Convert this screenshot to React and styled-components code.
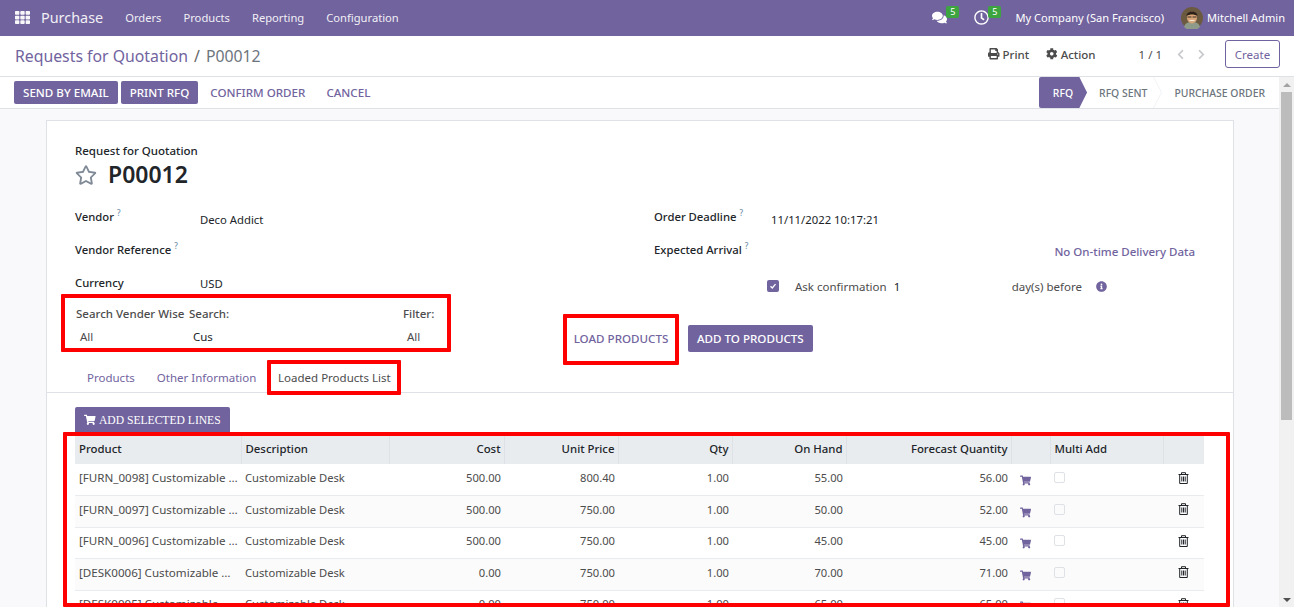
import React from 'react';
import styled, { createGlobalStyle } from 'styled-components';
import {
  FaCog,
  FaChevronLeft,
  FaChevronRight,
  FaComments,
  FaInfoCircle,
  FaPrint,
  FaRegClock,
  FaRegStar,
  FaShoppingCart,
  FaTh,
} from 'react-icons/fa';

const purple = '#71639e';
const red = '#ff0000';

const GlobalStyle = createGlobalStyle`
  html, body {
    margin: 0;
    height: 100%;
    overflow: hidden;
  }
  body {
    font-family: "Noto Sans", "Open Sans", sans-serif;
    font-size: 11.5px;
    color: #212529;
  }
`;

const Page = styled.div`
  height: 607px;
  display: flex;
  flex-direction: column;
  overflow: hidden;
`;

const NavBar = styled.header`
  height: 36px;
  flex: none;
  box-sizing: border-box;
  background: ${purple};
  color: #fff;
  display: flex;
  align-items: center;
  padding: 0 9px 1px 15px;
`;

const AppsIcon = styled(FaTh)`
  font-size: 15px;
  margin-right: 11px;
  opacity: 0.95;
`;

const Brand = styled.span`
  font-size: 14.4px;
  margin-right: 22px;
  opacity: 0.9;
`;

const NavItem = styled.span`
  font-size: 11.2px;
  margin-right: 22px;
  opacity: 0.9;
`;

const NavRight = styled.div`
  margin-left: auto;
  display: flex;
  align-items: center;
  font-size: 11.1px;
`;

const NavIcon = styled.span`
  position: relative;
  display: flex;
  font-size: 15px;
  margin-right: ${(p) => p.$gap}px;
`;

const Badge = styled.span`
  position: absolute;
  top: -4px;
  left: 14px;
  width: 13px;
  height: 12px;
  border-radius: 2px;
  background: #3da53f;
  color: #fff;
  font-size: 9px;
  line-height: 12px;
  text-align: center;
`;

const Avatar = styled.svg`
  width: 22px;
  height: 22px;
  margin: 0 4px 0 17px;
`;

const TitleRow = styled.div`
  height: 40px;
  flex: none;
  display: flex;
  align-items: center;
  padding: 0 14px 0 15px;
  background: #fff;
  border-bottom: 1px solid #dee2e6;
`;

const Breadcrumb = styled.div`
  font-size: 15.8px;
  margin-top: -1px;
  color: ${purple};
`;

const Slash = styled.span`
  color: #666;
  margin: 0 6px;
`;

const Current = styled.span`
  color: #6c757d;
`;

const SideActions = styled.div`
  margin-left: auto;
  display: flex;
  align-items: center;
  color: #4c4c4c;
  margin-top: -4px;
`;

const ActionLink = styled.span`
  display: flex;
  align-items: center;
  gap: 3px;
  margin-right: ${(p) => p.$gap}px;
  font-weight: 500;
`;

const Pager = styled.span`
  margin-right: 13px;
`;

const PagerArrow = styled.span`
  display: flex;
  color: #c7c9cc;
  font-size: 11px;
  margin-right: ${(p) => p.$gap}px;
`;

const CreateButton = styled.button`
  width: 55px;
  height: 28px;
  padding: 0;
  background: #fff;
  border: 1px solid ${purple};
  border-radius: 3px;
  color: ${purple};
  font: inherit;
`;

const Body = styled.div`
  flex: 1;
  min-height: 0;
  display: flex;
`;

const Main = styled.div`
  flex: 1;
  min-width: 0;
  display: flex;
  flex-direction: column;
`;

const StatusRow = styled.div`
  height: 31px;
  flex: none;
  display: flex;
  align-items: center;
  padding-left: 14px;
  background: #fff;
  border-bottom: 1px solid #dee2e6;
`;

const Button = styled.button`
  height: ${(p) => p.$h || 23}px;
  padding: 0 9px;
  margin-right: ${(p) => p.$gap || 0}px;
  border: none;
  border-radius: 2px;
  background: ${(p) => (p.$primary ? purple : 'transparent')};
  color: ${(p) => (p.$primary ? '#fff' : purple)};
  font-family: inherit;
  font-size: 11.6px;
  font-weight: 500;
  white-space: nowrap;
`;

const StatusBar = styled.div`
  margin-left: auto;
  display: flex;
  align-self: stretch;
  padding-right: 14px;
  font-size: 10.4px;
  font-weight: 500;
  color: #6c757d;
`;

const Stage = styled.span`
  position: relative;
  display: flex;
  align-items: center;
  padding-left: ${(p) => p.$left}px;
  padding-right: ${(p) => p.$right}px;
  ${(p) =>
    p.$active &&
    `
    background: ${purple};
    color: #fff;
    border-radius: 2px 0 0 2px;
    clip-path: polygon(0 0, 84% 0, 100% 50%, 84% 100%, 0 100%);
  `}
`;

const StageArrow = styled.svg`
  position: absolute;
  top: 0;
  right: 12px;
  width: 9px;
  height: 31px;
`;

const Content = styled.main`
  flex: 1;
  min-height: 0;
  background: #f9f9fb;
  padding: 11px 45px 0 46px;
  overflow: hidden;
`;

const ScrollBar = styled.div`
  width: 15px;
  flex: none;
  background: #f1f1f1;
  display: flex;
  flex-direction: column;
  align-items: center;
`;

const ScrollArrow = styled.span`
  width: 0;
  height: 0;
  margin: 6px 0 5px;
  border-left: 4px solid transparent;
  border-right: 4px solid transparent;
  ${(p) => (p.$up ? 'border-bottom: 4px solid #a3a3a3;' : 'border-top: 4px solid #505050;')}
`;

const ScrollThumb = styled.div`
  width: 11px;
  flex: 0 0 328px;
  background: #bcbcbc;
`;

const ScrollSpace = styled.div`
  flex: 1;
`;

const Sheet = styled.section`
  background: #fff;
  border: 1px solid #dee2e6;
  border-bottom: none;
  min-height: 520px;
`;

const Heading = styled.div`
  padding: 22px 28px 0;
  height: 66px;
`;

const Caption = styled.div`
  font-weight: 500;
  line-height: 16px;
`;

const DocTitle = styled.h1`
  display: flex;
  align-items: center;
  gap: 11px;
  margin: 0;
  font-size: 23px;
  font-weight: 600;
  line-height: 31px;
`;

const Star = styled(FaRegStar)`
  font-size: 22px;
  color: #7f8a96;
`;

const FormGrid = styled.div`
  display: grid;
  grid-template-columns: 579px 1fr;
  padding-left: 28px;
  height: 85px;
`;

const FieldRow = styled.div`
  display: flex;
  height: ${(p) => p.$h || 33}px;
`;

const Label = styled.div`
  width: ${(p) => p.$w}px;
  flex: none;
  font-weight: 500;
  font-size: 11.3px;
  line-height: 16px;
`;

const Hint = styled.sup`
  font-size: 8px;
  line-height: 0;
  color: #6f8fa8;
  margin-left: 3px;
`;

const Value = styled.div`
  padding-top: ${(p) => p.$top || 3}px;
  line-height: 16px;
  font-size: 11.3px;
`;

const OnTime = styled.div`
  margin-left: auto;
  margin-right: 38px;
  color: ${purple};
  font-weight: 500;
  line-height: 20px;
`;

const ConfirmRow = styled.div`
  display: flex;
  align-items: center;
  height: 16px;
  margin: 3px 0 0 113px;
  color: #4c4c4c;
`;

const CheckMark = styled.span`
  width: 12px;
  height: 12px;
  border-radius: 2px;
  background: ${purple};
  display: flex;
  align-items: center;
  justify-content: center;
  margin-right: 16px;
`;

const Qty = styled.span`
  width: 118px;
  margin-left: 7px;
  color: #212529;
`;

const InfoIcon = styled(FaInfoCircle)`
  color: ${purple};
  font-size: 11px;
  margin-left: 14px;
`;

const LoadRow = styled.div`
  display: flex;
  align-items: flex-start;
  height: 66px;
  padding-left: 14px;
`;

const RedBox = styled.div`
  border: 4px solid ${red};
  border-radius: 1px;
  box-sizing: border-box;
  flex: none;
`;

const FilterBox = styled(RedBox)`
  width: 390px;
  height: 58px;
  display: grid;
  grid-template-columns: 113px 214px 1fr;
  padding: 8px 0 0 11px;
  color: #4c4c4c;
  line-height: 16px;
`;

const FilterLabel = styled.div`
  font-weight: 500;
`;

const FilterValue = styled.div`
  padding: 3px 0 0 4px;
  color: ${(p) => (p.$dark ? '#212529' : '#4c4c4c')};
`;

const LoadBox = styled(RedBox)`
  width: 116px;
  height: 51px;
  margin: 20px 9px 0 112px;
  padding-bottom: 2px;
  display: flex;
  align-items: center;
  justify-content: center;
`;

const AddButton = styled(Button)`
  margin-top: 31px;
  height: 27px;
`;

const TabBar = styled.div`
  display: flex;
  align-items: center;
  height: 32px;
  padding-left: 40px;
  border-bottom: 1px solid #dee2e6;
`;

const Tab = styled.span`
  color: ${purple};
  margin-top: 2px;
  margin-right: ${(p) => p.$gap}px;
`;

const TabBox = styled(RedBox)`
  width: 134px;
  height: 35px;
  margin-top: 3px;
  display: flex;
  align-items: center;
  justify-content: center;
  color: #4c4c4c;
`;

const LinesPanel = styled.div`
  padding: 14px 0 0 16px;
`;

const AddLinesButton = styled.button`
  display: flex;
  align-items: center;
  justify-content: center;
  gap: 3px;
  margin-left: 12px;
  width: 155px;
  height: 26px;
  padding: 0;
  border: none;
  border-radius: 2px 2px 0 0;
  background: ${purple};
  color: #fff;
  font-family: "Liberation Serif", serif;
  font-size: 11.6px;
  white-space: nowrap;
`;

const TableBox = styled(RedBox)`
  width: 1167px;
  height: 175px;
  margin-top: -1px;
  padding-left: 8px;
  overflow: hidden;
`;

const Table = styled.table`
  width: 1129px;
  table-layout: fixed;
  border-collapse: collapse;
  font-size: 11.2px;
`;

const Th = styled.th`
  height: 28px;
  padding: 0 3px 4px 4px;
  box-sizing: border-box;
  background: #e9ecef;
  border-right: 1px solid #dee2e6;
  font-size: 11.4px;
  font-weight: 500;
  text-align: ${(p) => (p.$right ? 'right' : 'left')};
  white-space: nowrap;

  &:last-child {
    border-right: none;
  }
`;

const Tr = styled.tr`
  height: 31.5px;
  border-bottom: 1px solid #e9ecef;

  &:nth-child(even) {
    background: #fbfbfb;
  }
`;

const Td = styled.td`
  padding: 0 3px 4px 4px;
  color: #4c4c4c;
  text-align: ${(p) => p.$align || 'left'};
  white-space: nowrap;

  &:first-child {
    font-size: 11.6px;
  }
`;

const CartIcon = styled(FaShoppingCart)`
  display: block;
  margin: 6px 0 0 5px;
  font-size: 11px;
  color: ${purple};
`;

const TrashIcon = styled.svg`
  display: block;
  width: 11px;
  height: 12px;
  margin: 0 0 0 11px;
`;

const RowCheck = styled.span`
  display: block;
  width: 9px;
  height: 9px;
  border: 1px solid #dee2e6;
  border-radius: 2px;
`;

const columns = [
  { name: 'Product', width: 166 },
  { name: 'Description', width: 148 },
  { name: 'Cost', width: 115, right: true },
  { name: 'Unit Price', width: 114, right: true },
  { name: 'Qty', width: 114, right: true },
  { name: 'On Hand', width: 114, right: true },
  { name: 'Forecast Quantity', width: 165, right: true },
  { name: '', width: 39 },
  { name: 'Multi Add', width: 113 },
  { name: '', width: 41 },
];

const lines = [
  ['[FURN_0098] Customizable …', '500.00', '800.40', '55.00', '56.00'],
  ['[FURN_0097] Customizable …', '500.00', '750.00', '50.00', '52.00'],
  ['[FURN_0096] Customizable …', '500.00', '750.00', '45.00', '45.00'],
  ['[DESK0006] Customizable …', '0.00', '750.00', '70.00', '71.00'],
  ['[DESK0005] Customizable …', '0.00', '750.00', '65.00', '65.00'],
];

const App = () => (
  <Page>
    <GlobalStyle />
    <NavBar>
      <AppsIcon />
      <Brand>Purchase</Brand>
      <NavItem>Orders</NavItem>
      <NavItem>Products</NavItem>
      <NavItem>Reporting</NavItem>
      <NavItem>Configuration</NavItem>
      <NavRight>
        <NavIcon $gap={27}>
          <FaComments />
          <Badge>5</Badge>
        </NavIcon>
        <NavIcon $gap={26}>
          <FaRegClock />
          <Badge>5</Badge>
        </NavIcon>
        <span>My Company (San Francisco)</span>
        <Avatar viewBox="0 0 22 22">
          <circle cx="11" cy="11" r="11" fill="#6b5a40" />
          <path d="M3 20c1-4 4-5 8-5s7 1 8 5a11 11 0 0 1-16 0z" fill="#8e9a8a" />
          <ellipse cx="11" cy="10.500" rx="5" ry="6" fill="#d9a679" />
          <path d="M5.500 9c0-6 11-6 11 0-3-2-8-2-11 0z" fill="#2c2019" />
          <path d="M6.500 10h4M11.500 10h4" stroke="#3a2c22" strokeWidth="1" />
          <path d="M8.500 13.500h5" stroke="#f4ead8" strokeWidth="1" />
        </Avatar>
        <span>Mitchell Admin</span>
      </NavRight>
    </NavBar>
    <TitleRow>
      <Breadcrumb>
        Requests for Quotation<Slash>/</Slash>
        <Current>P00012</Current>
      </Breadcrumb>
      <SideActions>
        <ActionLink $gap={17}>
          <FaPrint />
          Print
        </ActionLink>
        <ActionLink $gap={43}>
          <FaCog />
          Action
        </ActionLink>
        <Pager>1 / 1</Pager>
        <PagerArrow $gap={10}>
          <FaChevronLeft />
        </PagerArrow>
        <PagerArrow $gap={18}>
          <FaChevronRight />
        </PagerArrow>
        <CreateButton>Create</CreateButton>
      </SideActions>
    </TitleRow>
    <Body>
      <Main>
        <StatusRow>
          <Button $primary $gap={3}>SEND BY EMAIL</Button>
          <Button $primary $gap={3}>PRINT RFQ</Button>
          <Button $gap={3}>CONFIRM ORDER</Button>
          <Button>CANCEL</Button>
          <StatusBar>
            <Stage $active $left={14} $right={14}>RFQ</Stage>
            <Stage $left={12} $right={27}>
              RFQ SENT
              <StageArrow viewBox="0 0 9 31" fill="none" stroke="#f1f3f5">
                <path d="M.500 0l8 15.500-8 15.500" />
              </StageArrow>
            </Stage>
            <Stage $left={0} $right={0}>PURCHASE ORDER</Stage>
          </StatusBar>
        </StatusRow>
        <Content>
          <Sheet>
            <Heading>
              <Caption>Request for Quotation</Caption>
              <DocTitle>
                <Star />
                P00012
              </DocTitle>
            </Heading>
            <FormGrid>
              <div>
                <FieldRow>
                  <Label $w={125}>Vendor<Hint>?</Hint></Label>
                  <Value>Deco Addict</Value>
                </FieldRow>
                <FieldRow>
                  <Label $w={125}>Vendor Reference<Hint>?</Hint></Label>
                </FieldRow>
                <FieldRow $h={19}>
                  <Label $w={125}>Currency</Label>
                  <Value $top={1}>USD</Value>
                </FieldRow>
              </div>
              <div>
                <FieldRow>
                  <Label $w={117}>Order Deadline<Hint>?</Hint></Label>
                  <Value>11/11/2022 10:17:21</Value>
                </FieldRow>
                <FieldRow>
                  <Label $w={117}>Expected Arrival<Hint>?</Hint></Label>
                  <OnTime>No On-time Delivery Data</OnTime>
                </FieldRow>
                <ConfirmRow>
                  <CheckMark>
                    <svg width="8" height="8" viewBox="0 0 8 8">
                      <path d="M1.500 4.200l1.800 1.800 3.200-3.800" fill="none" stroke="#fff" strokeWidth="1.300" />
                    </svg>
                  </CheckMark>
                  <span>Ask confirmation</span>
                  <Qty>1</Qty>
                  <span>day(s) before</span>
                  <InfoIcon />
                </ConfirmRow>
              </div>
            </FormGrid>
            <LoadRow>
              <FilterBox>
                <FilterLabel>Search Vender Wise</FilterLabel>
                <FilterLabel>Search:</FilterLabel>
                <FilterLabel>Filter:</FilterLabel>
                <FilterValue>All</FilterValue>
                <FilterValue $dark>Cus</FilterValue>
                <FilterValue>All</FilterValue>
              </FilterBox>
              <LoadBox>
                <Button>LOAD PRODUCTS</Button>
              </LoadBox>
              <AddButton $primary>ADD TO PRODUCTS</AddButton>
            </LoadRow>
            <TabBar>
              <Tab $gap={22}>Products</Tab>
              <Tab $gap={11}>Other Information</Tab>
              <TabBox>Loaded Products List</TabBox>
            </TabBar>
            <LinesPanel>
              <AddLinesButton>
                <FaShoppingCart />
                ADD SELECTED LINES
              </AddLinesButton>
              <TableBox>
                <Table>
                  <colgroup>
                    {columns.map((col, i) => (
                      <col key={i} width={col.width} />
                    ))}
                  </colgroup>
                  <thead>
                    <tr>
                      {columns.map((col, i) => (
                        <Th key={i} $right={col.right}>{col.name}</Th>
                      ))}
                    </tr>
                  </thead>
                  <tbody>
                    {lines.map((line) => (
                      <Tr key={line[0]}>
                        <Td>{line[0]}</Td>
                        <Td>Customizable Desk</Td>
                        <Td $align="right">{line[1]}</Td>
                        <Td $align="right">{line[2]}</Td>
                        <Td $align="right">1.00</Td>
                        <Td $align="right">{line[3]}</Td>
                        <Td $align="right">{line[4]}</Td>
                        <Td><CartIcon /></Td>
                        <Td><RowCheck /></Td>
                        <Td>
                          <TrashIcon viewBox="0 0 11 12" fill="none" stroke="#212529">
                            <path d="M3.500 2V.700h4V2M.500 2.500h10M1.700 2.500v9h7.600v-9M3.800 4.500v5M5.500 4.500v5M7.200 4.500v5" />
                          </TrashIcon>
                        </Td>
                      </Tr>
                    ))}
                  </tbody>
                </Table>
              </TableBox>
            </LinesPanel>
          </Sheet>
        </Content>
      </Main>
      <ScrollBar>
        <ScrollArrow $up />
        <ScrollThumb />
        <ScrollSpace />
        <ScrollArrow />
      </ScrollBar>
    </Body>
  </Page>
);

export default App;
